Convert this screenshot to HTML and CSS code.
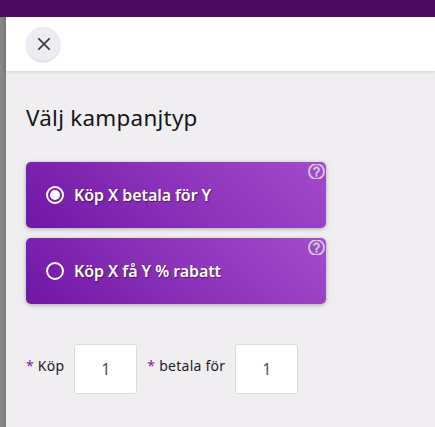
FILE: index.html
```html
<!DOCTYPE html>
<html lang="sv">
<head>
    <meta charset="UTF-8">
    <meta name="viewport" content="width=device-width, initial-scale=1.0">
    <title>Välj kampanjtyp</title>
    <link rel="stylesheet" href="styles.css">
</head>
<body>
    <div class="topbar"></div>
    <div class="page">
        <div class="panel">
            <div class="panel-header">
                <button class="close-button" type="button" aria-label="Stäng">
                    <svg width="14" height="14" viewBox="0 0 14 14"><path d="M1.400 1.400L12.600 12.600M12.600 1.400L1.400 12.600"/></svg>
                </button>
            </div>
            <div class="panel-body">
                <h1 class="title">Välj kampanjtyp</h1>
                <div class="options">
                    <label class="option">
                        <input class="radio" type="radio" name="type" checked>
                        <span class="option-text">Köp X betala för Y</span>
                        <svg class="help" viewBox="2 3 20 18"><path d="M11 18h2v-2h-2v2zm1-16C6.480 2 2 6.480 2 12s4.480 10 10 10 10-4.480 10-10S17.520 2 12 2zm0 18c-4.410 0-8-3.590-8-8s3.590-8 8-8 8 3.590 8 8-3.590 8-8 8zm0-14c-2.210 0-4 1.790-4 4h2c0-1.100.9-2 2-2s2 .9 2 2c0 2-3 1.750-3 5h2c0-2.250 3-2.500 3-5 0-2.210-1.790-4-4-4z"/></svg>
                    </label>
                    <label class="option">
                        <input class="radio" type="radio" name="type">
                        <span class="option-text">Köp X få Y % rabatt</span>
                        <svg class="help" viewBox="2 3 20 18"><path d="M11 18h2v-2h-2v2zm1-16C6.480 2 2 6.480 2 12s4.480 10 10 10 10-4.480 10-10S17.520 2 12 2zm0 18c-4.410 0-8-3.590-8-8s3.590-8 8-8 8 3.590 8 8-3.590 8-8 8zm0-14c-2.210 0-4 1.790-4 4h2c0-1.100.9-2 2-2s2 .9 2 2c0 2-3 1.750-3 5h2c0-2.250 3-2.500 3-5 0-2.210-1.790-4-4-4z"/></svg>
                    </label>
                </div>
                <div class="fields">
                    <label class="field-label" for="buy"><span class="required">*</span> Köp</label>
                    <input class="field-input" id="buy" type="text" value="1">
                    <label class="field-label" for="pay"><span class="required">*</span> betala för</label>
                    <input class="field-input" id="pay" type="text" value="1">
                </div>
            </div>
        </div>
    </div>
</body>
</html>
```

FILE: styles.css
```css
* {
    box-sizing: border-box;
}
body {
    margin: 0;
    height: 100vh;
    display: flex;
    flex-direction: column;
    overflow: hidden;
    font-family: "Noto Sans", sans-serif;
    color: #1b1b1f;
}
.topbar {
    height: 17px;
    flex: none;
    background: #4c0a61;
}
.page {
    flex: 1;
    padding-left: 6px;
    background: linear-gradient(to right, #888, #7d7d7d 6px);
}
.panel {
    height: 100%;
    background: #f0eef1;
}
.panel-header {
    height: 54px;
    padding: 10px 20px;
    background: #fff;
    box-shadow: 0 1px 3px rgba(0, 0, 0, 0.14);
}
.close-button {
    display: flex;
    align-items: center;
    justify-content: center;
    width: 34px;
    height: 34px;
    padding: 0 0 0 1px;
    border: none;
    border-radius: 50%;
    background: #eeebf2;
    box-shadow: 0 1px 2px rgba(0, 0, 0, 0.2);
}
.close-button svg {
    fill: none;
    stroke: #3c3c3c;
    stroke-width: 1.7;
}
.panel-body {
    padding: 31px 20px 0;
}
.title {
    margin: 0 0 28px;
    font-size: 22.4px;
    font-weight: 400;
    line-height: 32px;
    letter-spacing: 0.27px;
    color: #151518;
}
.options {
    display: flex;
    flex-direction: column;
    gap: 10px;
    width: 300px;
}
.option {
    position: relative;
    display: flex;
    align-items: center;
    gap: 10px;
    height: 66px;
    padding-left: 20px;
    border-radius: 5px;
    background: linear-gradient(45deg, #7016a6, #8b32b9 50%, #a24bcb);
    box-shadow: 0 1px 4px rgba(0, 0, 0, 0.3);
}
.radio {
    appearance: none;
    display: flex;
    align-items: center;
    justify-content: center;
    width: 18px;
    height: 18px;
    margin: 0;
    border: 2px solid #fff;
    border-radius: 50%;
}
.radio:checked::before {
    content: "";
    width: 10px;
    height: 10px;
    border-radius: 50%;
    background: #fff;
}
.option-text {
    font-size: 16px;
    font-weight: 600;
    letter-spacing: -0.08px;
    color: #fff;
    text-shadow: 1px 1px 1px rgba(0, 0, 0, 0.4);
}
.help {
    position: absolute;
    top: 2px;
    right: 1px;
    width: 17px;
    height: 15px;
    fill: #d8c8dc;
    stroke: #d8c8dc;
    stroke-width: 0.4;
}
.fields {
    display: flex;
    gap: 10px;
    margin-top: 40px;
}
.field-label {
    padding-top: 11px;
    font-size: 14px;
    line-height: 22px;
    letter-spacing: 0.25px;
    white-space: nowrap;
}
.required {
    color: #7b1fa2;
}
.field-input {
    width: 63px;
    height: 50px;
    padding: 0;
    border: 1px solid #dcdadd;
    border-radius: 3px;
    background: #fff;
    font-family: inherit;
    font-size: 16px;
    text-align: center;
    color: #555;
}
```
